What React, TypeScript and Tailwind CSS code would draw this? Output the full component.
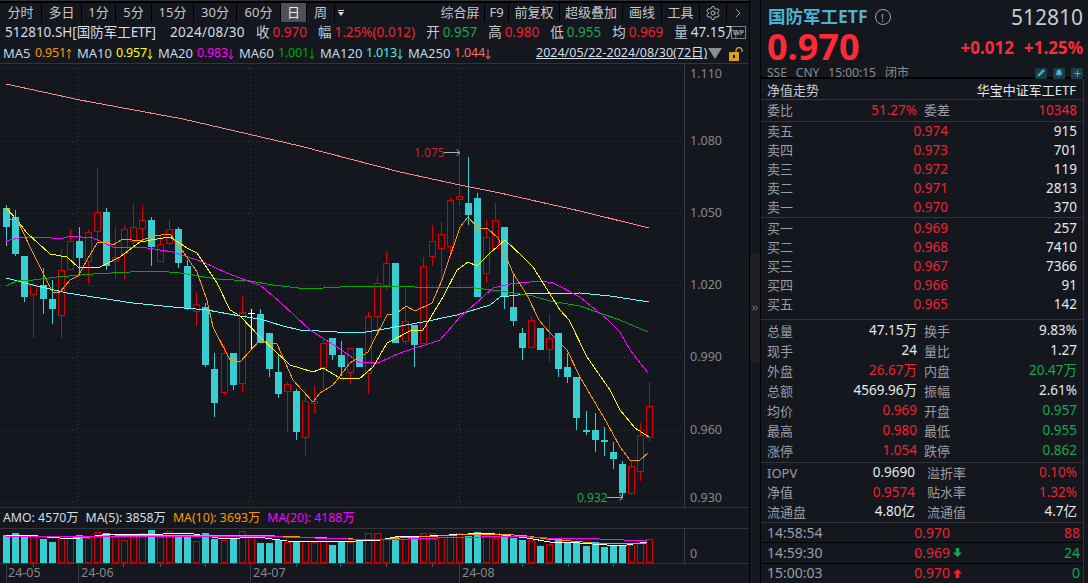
import React from "react";
import { Settings, ChevronRight, Pencil, Bell, Plus, ChevronsRight } from "lucide-react";

const X = (i: number) => 6.3 + 9.05 * i;
// [isRed, bodyTop, bodyBottom, wickTop, wickBottom]
const C: [number, number, number, number, number][] = [
  [0,208,227,205,246],[0,217,254,210,256],[0,256,297,256,302],[1,285,294,283,338],[0,285,299,268,314],
  [0,299,309,280,324],[1,270,315,249,338],[1,241,269,229,269],[0,241,258,227,275],[1,232,261,229,283],
  [1,212,231,167,240],[0,212,266,208,270],[1,257,261,227,279],[1,229,253,225,279],[1,227,241,203,246],
  [1,220,228,205,241],[0,220,247,217,266],[1,244,261,235,261],[1,229,243,220,245],[0,229,263,227,268],
  [0,266,308,260,310],[1,304,311,292,326],[0,307,365,303,367],[0,369,403,353,417],[1,353,392,345,395],
  [0,353,385,353,390],[1,312,383,295,393],[2,313,314,309,350],[0,314,343,309,343],[0,333,369,333,377],
  [0,372,394,355,398],[1,384,391,382,432],[0,391,432,389,440],[1,401,437,389,456],[1,401,403,386,413],
  [1,343,367,338,389],[0,338,355,338,360],[0,355,367,341,376],[1,348,372,348,384],[0,348,367,348,367],
  [1,316,373,312,394],[1,283,316,275,333],[1,263,285,251,290],[0,263,343,263,343],[1,321,341,288,345],
  [0,325,345,325,367],[1,266,343,257,343],[1,241,256,225,266],[1,234,248,222,280],[1,200,246,198,257],
  [1,196,199,153,206],[0,203,215,157,225],[0,198,297,193,297],[1,237,273,220,283],[1,220,248,203,248],
  [0,227,297,227,309],[0,307,321,274,326],[0,333,348,328,360],[1,320,347,316,347],[0,328,350,328,350],
  [1,338,349,314,362],[0,333,369,333,377],[0,367,377,353,383],[0,377,418,377,430],[0,430,432,411,435],
  [0,430,440,413,452],[0,440,442,427,456],[0,452,459,442,469],[0,464,493,461,497],[1,466,493,460,495],
  [1,435,471,423,481],[1,406,437,382,442],
];
const V = [536,534,537,537,540,543,537,537,536,539,533,534,537,541,537,534,531,538,532,537,537,542,534,540,541,539,532,538,544,544,541,543,543,542,543,542,546,543,543,542,534,534,540,538,538,540,534,534,538,536,534,537,533,536,539,535,539,541,541,547,545,540,543,542,547,543,548,546,546,546,543,540];
const VR = C.map((c) => c[0] !== 0);

const MA250 = "6,84 80,100 183,119 300,146 400,172 460,185 500,193 580,211 649,228";
const MA120 = "6,278 33,285 67,293 100,298 133,303 173,307 207,310 240,316 260,319 283,326 300,330 337,332 360,333 390,328 423,322 457,315 490,305 500,297 527,294 580,293 610,296 649,302";
const MA60 = "6,286 17,281 33,280 57,277 93,274 130,272 157,271 180,273 193,275 217,279 250,281 273,285 307,289 340,287 390,286 440,288 467,287 500,291 533,296 550,301 580,306 620,320 648,332";
const MA20 = "6,241 23,237 43,237 60,239 70,236 93,238 113,247 147,248 173,252 203,262 227,273 240,278 260,285 280,302 310,330 337,347 360,363 380,362 400,353 440,340 460,317 493,288 510,284 540,281 553,283 580,297 608,320 620,332 630,350 648,373";
const MA10 = "6,208 17,220 27,233 50,254 67,257 78,267 100,267 120,257 140,242 157,239 170,237 187,248 197,253 217,283 230,310 240,316 260,337 290,365 313,372 323,368 340,378 359,379 373,367 387,343 410,331 423,330 443,297 457,270 468,262 477,266 490,253 505,240 523,257 533,267 560,310 569,320 587,357 610,390 620,410 635,428 649,437";
const MA5 = "6,219 17,219 30,247 43,273 53,293 60,292 70,280 78,276 87,260 97,243 107,242 113,245 123,239 140,241 153,236 170,234 180,247 197,272 207,300 213,327 230,360 240,362 260,340 277,344 293,380 313,402 320,393 333,385 350,363 368,352 387,315 397,313 406,306 415,311 432,303 442,280 460,227 468,217 478,228 488,229 498,238 513,273 527,295 539,320 550,333 567,350 580,377 607,423 620,447 630,460 640,460 648,453";

const FONT = { fontFamily: '"Noto Sans","Noto Sans CJK SC",sans-serif' };

const R = "text-[#f0222f]";
const G = "text-[#14a94e]";

function Tool({ w, children, active }: { w: string; children?: React.ReactNode; active?: boolean }) {
  return (
    <div className={`${w} h-[19px] flex items-center justify-center border-r border-[#000000] ${active ? "bg-[#4d4f58] text-[#e8e8e8]" : ""}`}>
      {children}
    </div>
  );
}

function Chart() {
  return (
    <svg width="684" height="444" viewBox="0 64 684 444" className="block shrink-0">
      {[68, 141, 213, 285, 357, 430, 502].map((y) => (
        <line key={y} x1="0" x2="684" y1={y + 0.5} y2={y + 0.5} stroke="#3a3c42" strokeDasharray="1 3" />
      ))}
      {[78, 250, 459].map((x) => (
        <line key={x} x1={x + 0.5} x2={x + 0.5} y1="68" y2="508" stroke="#3a3c42" strokeDasharray="1 3" />
      ))}
      {C.map((c, i) => {
        const x = Math.round(X(i)) + 0.5;
        const col = c[0] === 1 ? "#d60000" : c[0] === 2 ? "#ffffff" : "#38cdd0";
        const bw = 7;
        return (
          <g key={i}>
            <line x1={x} x2={x} y1={c[3]} y2={c[4]} stroke={col} />
            {c[0] === 1 ? (
              <rect x={x - 3} y={c[1] + 0.5} width={bw - 1} height={Math.max(c[2] - c[1], 1)} fill="#14171d" stroke={col} />
            ) : (
              <rect x={x - 3.5} y={c[1]} width={bw} height={Math.max(c[2] - c[1], 1)} fill={col} />
            )}
          </g>
        );
      })}
      <g fill="none" shapeRendering="crispEdges">
        <polyline points={MA250} stroke="#ff8a8a" />
        <polyline points={MA120} stroke="#66ffff" />
        <polyline points={MA60} stroke="#00aa00" />
        <polyline points={MA20} stroke="#ff00ff" />
        <polyline points={MA10} stroke="#ffff00" />
        <polyline points={MA5} stroke="#ff9900" />
      </g>
      <text x="414" y="157" fill="#c4262e" fontSize="12" style={FONT}>1.075</text>
      <path d="M444 152.5H459.5M456.5 149.5l3.5 3-3.5 3" fill="none" stroke="#b0b0b0" />
      <text x="577" y="502" fill="#14a94e" fontSize="12" style={FONT}>0.932</text>
      <path d="M607 497.5H622.5M619.5 494.5l3.5 3-3.5 3" fill="none" stroke="#b0b0b0" />
    </svg>
  );
}

function VolChart() {
  const pts1 = "6,536 28,536 47,538 73,540 110,535 140,536 187,534 207,537 223,540 257,538 287,542 333,543 380,541 400,537 430,537 487,534 527,539 550,543 567,543 593,545 620,547 647,543";
  const pts2 = "73,538 90,538 140,536 250,536 300,538 380,541 400,539 457,536 500,535 527,537 547,540 583,543 600,545 647,544";
  const pts3 = "6,537 250,537 380,541 437,539 480,538 513,537 547,539 600,540 647,542";
  return (
    <svg width="684" height="34" viewBox="0 530 684 34" className="block shrink-0">
      {V.map((t, i) => {
        const x = Math.round(X(i)) + 0.5;
        return VR[i] ? (
          <rect key={i} x={x - 3} y={t + 0.5} width="6" height={563 - t} fill="#14171d" stroke="#d60000" />
        ) : (
          <rect key={i} x={x - 3.5} y={t} width="7" height={564 - t} fill="#38cdd0" />
        );
      })}
      <g fill="none" shapeRendering="crispEdges">
        <polyline points={pts1} stroke="#ffffff" />
        <polyline points={pts2} stroke="#ff9900" />
        <polyline points={pts3} stroke="#ff00ff" />
      </g>
    </svg>
  );
}

function Axis({ cls, children }: { cls: string; children: React.ReactNode }) {
  return <span className={`absolute left-[5px] -translate-y-1/2 text-[12.5px] text-[#84878e] ${cls}`}>{children}</span>;
}

function Row2({ label, val, cls }: { label: string; val: string; cls: string }) {
  return (
    <span className="flex items-center gap-[3px] mr-[11px] shrink-0">
      <span className="text-[#c9ccd2]">{label}</span>
      <span className={cls}>{val}</span>
    </span>
  );
}

function Arrow({ up, color }: { up: boolean; color: string }) {
  return (
    <svg width="6" height="12" viewBox="0 0 6 12" className="shrink-0">
      <path d={up ? "M3 11V1M1 4l2-3 2 3" : "M3 1V11M1 8l2 3 2-3"} fill="none" stroke={color} />
    </svg>
  );
}

function MA({ name, val, col, hex, up, w, last }: { name: string; val: string; col: string; hex: string; up?: boolean; w: string; last?: boolean }) {
  return (
    <span className={`flex items-center shrink-0 ${last ? "" : "mr-[5px]"}`}>
      <span className={`${w} text-[#c0d8ee]`}>{name}</span>
      <span className={`w-[31px] text-[12.5px] tracking-[-0.2px] ${col}`}>{val}</span>
      <Arrow up={!!up} color={hex} />
    </span>
  );
}

function Book({ l, p, v }: { l: string; p: string; v: string }) {
  return (
    <div className="h-[19px] flex items-center px-[6px] text-[13.5px]">
      <span className="w-[60px] text-[13px] text-[#9a9da3]">{l}</span>
      <span className={`w-[121px] text-right ${R}`}>{p}</span>
      <span className="flex-1 text-right text-[#e6e8ea]">{v}</span>
    </div>
  );
}

function Stat({ a, b, ac, c, d, dc }: { a: string; b: string; ac?: string; c: string; d: string; dc?: string }) {
  return (
    <div className="h-[20px] flex items-center px-[6px] text-[13.5px]">
      <span className="w-[50px] text-[13px] text-[#9a9da3]">{a}</span>
      <span className={`w-[100px] text-right ${ac ?? "text-[#e6e8ea]"}`}>{b}</span>
      <span className="w-[50px] ml-[7px] text-[13px] text-[#9a9da3]">{c}</span>
      <span className={`flex-1 text-right ${dc ?? "text-[#e6e8ea]"}`}>{d}</span>
    </div>
  );
}

function Stat2({ a, b, ac, c, d, dc }: { a: string; b: string; ac?: string; c: string; d: string; dc?: string }) {
  return (
    <div className="h-[19.5px] flex items-center px-[6px] text-[13.5px]">
      <span className="w-[50px] text-[13px] text-[#9a9da3]">{a}</span>
      <span className={`w-[98px] text-right ${ac ?? "text-[#e6e8ea]"}`}>{b}</span>
      <span className="w-[50px] ml-[12px] text-[13px] text-[#9a9da3]">{c}</span>
      <span className={`flex-1 text-right ${dc ?? "text-[#e6e8ea]"}`}>{d}</span>
    </div>
  );
}

function Tick({ t, p, pc, ic, v, vc }: { t: string; p: string; pc: string; ic?: string; v: string; vc: string }) {
  return (
    <div className="flex-1 flex items-center pl-[6px] pr-[3px] text-[14px]">
      <span className="w-[84px] text-[#9a9da3]">{t}</span>
      <span className={`w-[99px] text-right ${pc}`}>{p}</span>
      <span className="w-[10px] ml-[3px] flex items-center">
        {ic === "up" && (
          <svg width="9" height="9" viewBox="0 0 9 9"><path d="M4.5 0L9 4.5H6.2V9H2.8V4.5H0Z" fill="#f0222f" /></svg>
        )}
        {ic === "down" && (
          <svg width="9" height="9" viewBox="0 0 9 9"><path d="M4.5 9L9 4.5H6.2V0H2.8V4.5H0Z" fill="#14a94e" /></svg>
        )}
      </span>
      <span className={`flex-1 text-right ${vc}`}>{v}</span>
    </div>
  );
}

const TICKS = ["left-[33px]", "left-[123px]", "left-[160px]", "left-[205px]", "left-[296px]", "left-[340px]", "left-[386px]", "left-[432px]", "left-[522px]", "left-[568px]", "left-[613px]"];

export default function App() {
  return (
    <div className="w-[1088px] h-[583px] overflow-hidden flex bg-[#14171d] text-[13px] leading-none" style={FONT}>
      {/* Left */}
      <div className="w-[750px] shrink-0 flex flex-col border-r border-[#000000]">
        <div className="h-[3px] bg-[#000000] border-t border-[#2e3035] shrink-0" />
        <div className="h-[19px] flex items-center justify-between text-[13px] text-[#c3c6cc] shrink-0 pr-[1px]">
          <div className="flex items-center">
            <Tool w="w-[42px]">分时</Tool>
            <Tool w="w-[40px]">多日</Tool>
            <Tool w="w-[34px]">1分</Tool>
            <Tool w="w-[36px]">5分</Tool>
            <Tool w="w-[42px]">15分</Tool>
            <Tool w="w-[43px]">30分</Tool>
            <Tool w="w-[44px]">60分</Tool>
            <Tool w="w-[26px]" active>日</Tool>
            <Tool w="w-[28px]">周</Tool>
            <div className="w-[12px] flex flex-col items-center gap-[1px]">
              <div className="w-[6px] h-[1px] bg-[#d8d8d8]" />
              <div className="w-0 h-0 border-l-[3px] border-r-[3px] border-t-[4px] border-l-transparent border-r-transparent border-t-[#d8d8d8]" />
            </div>
          </div>
          <div className="flex items-center">
            <Tool w="w-[49px]">综合屏</Tool>
            <Tool w="w-[24px]">F9</Tool>
            <Tool w="w-[51px]">前复权</Tool>
            <Tool w="w-[63px]">超级叠加</Tool>
            <Tool w="w-[39px]">画线</Tool>
            <Tool w="w-[38px]">工具</Tool>
            <Tool w="w-[27px]"><Settings size={16} strokeWidth={1.5} className="text-[#b8bbc0]" /></Tool>
            <div className="w-[21px] flex justify-center"><ChevronRight size={16} strokeWidth={1.5} className="text-[#9a9da3]" /></div>
          </div>
        </div>

        <div className="h-[22px] relative flex items-center px-[5px] text-[13.5px] whitespace-nowrap shrink-0">
          <span className="text-[#d5dde6] w-[165px] shrink-0">512810.SH[国防军工<span className="tracking-[-0.5px]">ETF]</span></span>
          <span className="text-[#d5dde6] w-[86px] shrink-0 tracking-[0.3px]">2024/08/30</span>
          <Row2 label="收" val="0.970" cls={R} />
          <Row2 label="幅" val="1.25%(0.012)" cls={R} />
          <Row2 label="开" val="0.957" cls={G} />
          <Row2 label="高" val="0.980" cls={R} />
          <Row2 label="低" val="0.955" cls={G} />
          <Row2 label="均" val="0.969" cls={R} />
          <Row2 label="量" val="47.15万" cls="text-[#d5dde6]" />
          <span className="absolute left-[731px] top-[4px] text-[7px] font-bold text-[#9a9da3] border border-[#7a7d83] px-[1px] py-[2px] bg-[#14171d]/60">WP</span>
        </div>

        <div className="h-[20px] flex items-center pl-[3px] text-[13px] whitespace-nowrap shrink-0 border-b border-[#333539]">
          <MA name="MA5" val="0.951" col="text-[#ff9900]" hex="#ff9900" up w="w-[32px]" />
          <MA name="MA10" val="0.957" col="text-[#ffff00]" hex="#ffff00" w="w-[39px]" />
          <MA name="MA20" val="0.983" col="text-[#ff00ff]" hex="#ff00ff" w="w-[39px]" />
          <MA name="MA60" val="1.001" col="text-[#00a800]" hex="#00a800" w="w-[39px]" />
          <MA name="MA120" val="1.013" col="text-[#55e8e8]" hex="#55e8e8" w="w-[46px]" />
          <MA name="MA250" val="1.044" col="text-[#f0706c]" hex="#f0706c" w="w-[46px]" last />
          <span className="ml-[45px] underline text-[12.5px] text-[#d5dde6]">2024/05/22-2024/08/30(72日)</span>
          <div className="ml-[1px] w-0 h-0 border-l-[7px] border-r-[7px] border-t-[11px] border-l-transparent border-r-transparent border-t-[#8a8d92]" />
          <svg width="16" height="14" viewBox="0 0 16 14" className="ml-[6px]">
            <rect x="1" y="5" width="10" height="9" fill="#d9a020" />
            <path d="M8 5V3.5a3 3 0 0 1 6 0V5" fill="none" stroke="#d9a020" strokeWidth="1.3" />
            <rect x="5" y="8" width="2" height="3" fill="#14171d" />
          </svg>
        </div>

        <div className="h-[444px] flex relative shrink-0 border-b border-[#333539]">
          <Chart />
          <div className="flex-1 border-l border-[#3a3c42] relative">
            <Axis cls="top-[10px]">1.110</Axis>
            <Axis cls="top-[77px]">1.080</Axis>
            <Axis cls="top-[149px]">1.050</Axis>
            <Axis cls="top-[221px]">1.020</Axis>
            <Axis cls="top-[293px]">0.990</Axis>
            <Axis cls="top-[366px]">0.960</Axis>
            <Axis cls="top-[434px]">0.930</Axis>
          </div>
        </div>

        <div className="h-[21px] flex items-center px-[3px] text-[12.3px] whitespace-nowrap shrink-0 border-b border-[#333539] gap-[7px]">
          <span className="text-[#d5dde6]">AMO: 4570万</span>
          <span className="text-[#d5dde6]">MA(5): 3858万</span>
          <span className="text-[#ff9900]">MA(10): 3693万</span>
          <span className="text-[#ff00ff]">MA(20): 4188万</span>
        </div>

        <div className="h-[35px] flex shrink-0 border-b border-[#333539]">
          <VolChart />
          <div className="flex-1 border-l border-[#3a3c42] relative">
            <Axis cls="top-[25px]">0</Axis>
          </div>
        </div>

        <div className="flex-1 flex items-center text-[12.5px] text-[#84878e] relative">
          <div className="w-[72px] pl-[1px] border-l border-[#3a3c42] ml-[6px] h-full flex items-center">24-05</div>
          <div className="w-[172px] pl-[2px] border-l border-[#3a3c42] h-full flex items-center">24-06</div>
          <div className="w-[209px] pl-[2px] border-l border-[#3a3c42] h-full flex items-center">24-07</div>
          <div className="pl-[2px] border-l border-[#3a3c42] h-full flex items-center">24-08</div>
          {TICKS.map((t) => (
            <span key={t} className={`absolute top-0 w-px h-[3px] bg-[#55575d] ${t}`} />
          ))}
        </div>
      </div>

      {/* Handle */}
      <div className="w-[10px] shrink-0 flex flex-col pt-[253px]">
        <div className="w-full h-[110px] bg-[#1c1e23] flex items-center justify-center text-[#9a9da3]">
          <ChevronsRight size={10} />
        </div>
      </div>

      {/* Right */}
      <div className="flex-1 min-w-0 flex flex-col border-l border-[#000000] text-[14px] whitespace-nowrap">
        <div className="h-[79px] shrink-0 border-b-[2px] border-[#000000] pl-[7px] pr-[1px] pt-[7px] mr-[4px] flex flex-col">
          <div className="flex items-center h-[20px]">
            <span className="text-[17.5px] font-bold text-[#4db3cf]">国防军工ETF</span>
            <span className="ml-[7px] w-[16px] h-[16px] rounded-full border border-[#a0a3a8] text-[#a0a3a8] text-[11px] flex items-center justify-center">!</span>
            <span className="ml-auto text-[21px] text-[#c8ccd0]">512810</span>
          </div>
          <div className="flex items-center h-[36px] mt-[2px]">
            <span className="text-[36px] font-bold text-[#ff2a37] -ml-[1px]">0.970</span>
            <span className="ml-auto text-[17px] font-bold text-[#ff2a37]">+0.012</span>
            <span className="ml-[10px] text-[17px] font-bold text-[#ff2a37]">+1.25%</span>
          </div>
          <div className="flex items-center mt-[2px] text-[12px] text-[#8a8d90] gap-[9px] -ml-[1px]">
            <span>SSE</span><span>CNY</span><span>15:00:15</span><span>闭市</span>
            <span className="ml-auto flex gap-[6px]">
              <span className="w-[12px] h-[11px] bg-[#1d3a47] flex items-center justify-center"><Pencil size={8} className="text-[#4db3cf]" fill="#4db3cf" /></span>
              <span className="w-[12px] h-[11px] bg-[#1d3a47] flex items-center justify-center"><Bell size={8} className="text-[#4db3cf]" fill="#4db3cf" /></span>
              <span className="w-[12px] h-[11px] bg-[#1d3a47] flex items-center justify-center"><Plus size={9} strokeWidth={3} className="text-[#4db3cf]" /></span>
            </span>
          </div>
        </div>

        <div className="flex-1 mr-[4px] border-r border-[#333539] flex flex-col">
          <div className="h-[21px] shrink-0 flex items-center justify-between pt-[2px] px-[6px] border-b border-[#333539] text-[13px]">
            <span className="text-[#c3c6cc]">净值走势</span>
            <span className="text-[#e6e8ea] pr-[1px]">华宝中证军工ETF</span>
          </div>
          <div className="h-[22px] shrink-0 flex items-center px-[6px] border-b border-[#333539] text-[13.5px]">
            <span className="w-[50px] text-[13px] text-[#9a9da3]">委比</span>
            <span className={`w-[100px] text-right ${R}`}>51.27%</span>
            <span className="w-[50px] ml-[7px] text-[13px] text-[#9a9da3]">委差</span>
            <span className={`flex-1 text-right ${R}`}>10348</span>
          </div>
          <div className="h-[96px] shrink-0 flex flex-col border-b border-[#333539]">
            <Book l="卖五" p="0.974" v="915" />
            <Book l="卖四" p="0.973" v="701" />
            <Book l="卖三" p="0.972" v="119" />
            <Book l="卖二" p="0.971" v="2813" />
            <Book l="卖一" p="0.970" v="370" />
          </div>
          <div className="h-[102px] shrink-0 flex flex-col pt-[1px] border-b border-[#333539]">
            <Book l="买一" p="0.969" v="257" />
            <Book l="买二" p="0.968" v="7410" />
            <Book l="买三" p="0.967" v="7366" />
            <Book l="买四" p="0.966" v="91" />
            <Book l="买五" p="0.965" v="142" />
          </div>
          <div className="h-[143px] shrink-0 flex flex-col pt-[1px] border-b border-[#333539]">
            <Stat a="总量" b="47.15万" c="换手" d="9.83%" />
            <Stat a="现手" b="24" c="量比" d="1.27" />
            <Stat a="外盘" b="26.67万" ac={R} c="内盘" d="20.47万" dc={G} />
            <Stat a="总额" b="4569.96万" c="振幅" d="2.61%" />
            <Stat a="均价" b="0.969" ac={R} c="开盘" d="0.957" dc={G} />
            <Stat a="最高" b="0.980" ac={R} c="最低" d="0.955" dc={G} />
            <Stat a="涨停" b="1.054" ac={R} c="跌停" d="0.862" dc={G} />
          </div>
          <div className="h-[60px] shrink-0 flex flex-col justify-center border-b border-[#333539]">
            <Stat2 a="IOPV" b="0.9690" c="溢折率" d="0.10%" dc={R} />
            <Stat2 a="净值" b="0.9574" ac={R} c="贴水率" d="1.32%" dc={R} />
            <Stat2 a="流通盘" b="4.80亿" c="流通值" d="4.7亿" />
          </div>
          <div className="flex-1 flex flex-col">
            <Tick t="14:58:54" p="0.970" pc={R} v="88" vc={R} />
            <div className="h-px bg-[#000000] shrink-0" />
            <Tick t="14:59:30" p="0.969" pc={R} ic="down" v="24" vc={G} />
            <div className="h-px bg-[#000000] shrink-0" />
            <Tick t="15:00:03" p="0.970" pc={R} ic="up" v="0" vc={G} />
          </div>
        </div>
      </div>
    </div>
  );
}
